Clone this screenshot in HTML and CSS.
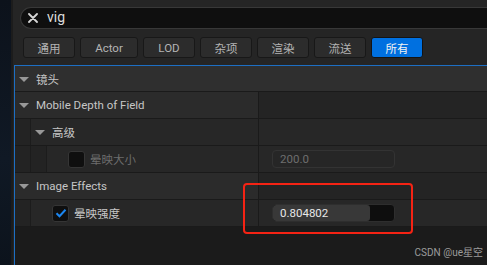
FILE: index.html
```html
<!DOCTYPE html>
<html>
<head>
<meta charset="utf-8">
<title>details</title>
<link rel="stylesheet" href="styles.css">
</head>
<body>
<div class="app">
  <div class="strip"></div>
  <div class="panel">
    <div class="search">
      <svg class="clear" width="10" height="10" viewBox="0 0 10 10"><path d="M1 1L9 9M9 1L1 9" stroke="#d6d6d6" stroke-width="1.8" stroke-linecap="round"/></svg>
      <span class="query">vig</span>
    </div>
    <div class="filters">
      <span class="btn">通用</span>
      <span class="btn wide">Actor</span>
      <span class="btn">LOD</span>
      <span class="btn">杂项</span>
      <span class="btn">渲染</span>
      <span class="btn">流送</span>
      <span class="btn on">所有</span>
    </div>
    <div class="tree">
      <div class="row cat">
        <div class="name"><span class="arrow"></span>镜头</div>
      </div>
      <div class="row group">
        <div class="name"><span class="arrow"></span>Mobile Depth of Field</div>
        <div class="value"></div>
      </div>
      <div class="row sub">
        <div class="name"><span class="indent"></span><span class="arrow"></span>高级</div>
        <div class="value"></div>
      </div>
      <div class="row prop">
        <div class="name"><span class="indent"></span><span class="indent"></span><span class="check"></span><span class="dim">晕映大小</span></div>
        <div class="value"><span class="field off">200.0</span></div>
      </div>
      <div class="row group">
        <div class="name"><span class="arrow"></span>Image Effects</div>
        <div class="value"></div>
      </div>
      <div class="row prop">
        <div class="name"><span class="indent"></span><span class="check on"><svg width="12" height="10" viewBox="0 0 12 10"><path d="M1.5 5.2L4.5 8.2L10.5 1.8" fill="none" stroke="#1b86f0" stroke-width="2"/></svg></span>晕映强度</div>
        <div class="value"><span class="field slider"><span class="fill" style="width: 97px"></span><span class="num">0.804802</span></span></div>
      </div>
      <div class="mark"></div>
      <div class="credit">CSDN @ue星空</div>
    </div>
  </div>
</div>
</body>
</html>
```

FILE: styles.css
```css
* {
    box-sizing: border-box;
    margin: 0;
    padding: 0;
}

body {
    background: #1b1b1b;
    font-family: Roboto, "Noto Sans CJK SC", sans-serif;
    font-size: 11.5px;
    color: #c6c6c6;
    overflow: hidden;
}

.app {
    display: flex;
    height: 265px;
}

.strip {
    width: 13px;
    background: linear-gradient(180deg, #0c121b, #101925 60%, #0c131c);
    border-right: 2px solid #1c1c1c;
    flex: none;
}

.panel {
    flex: 1;
    background: #252525;
    display: flex;
    flex-direction: column;
    min-width: 0;
}

.search {
    margin: 7px 0 0 7px;
    height: 22px;
    background: #0f0f0f;
    border: 1px solid #383838;
    border-right: none;
    border-radius: 11px 0 0 11px;
    display: flex;
    align-items: center;
    padding-left: 7px;
    gap: 9px;
}

.query {
    color: #dcdcdc;
    font-size: 14px;
    line-height: 1;
    padding-bottom: 2px;
}

.filters {
    display: flex;
    gap: 5px;
    margin: 8px 0 0 10px;
    height: 21px;
}

.btn {
    width: 52px;
    height: 21px;
    border: 1px solid #181818;
    border-radius: 3px;
    background: #2c2c2c;
    color: #b4b4b4;
    display: flex;
    align-items: center;
    justify-content: center;
}

.btn.wide {
    width: 58px;
}

.btn.on {
    background: #0070e0;
    border-color: #141414;
    color: #f2f2f2;
}

.tree {
    position: relative;
    flex: 1;
    margin: 7px 0 0 1px;
    border-top: 1px solid #1d6fc4;
    border-left: 1px solid #1d6fc4;
    background: #1b1b1b;
}

.row {
    display: flex;
    height: 27px;
    border-bottom: 1px solid #1a1a1a;
}

.row:first-child {
    height: 26px;
}

.row:last-of-type {
    border-bottom: none;
    height: 26px;
}

.name {
    width: 243px;
    display: flex;
    align-items: center;
    padding-left: 4px;
    flex: none;
}

.value {
    flex: 1;
    border-left: 1px solid #1a1a1a;
    display: flex;
    align-items: center;
    padding-left: 13px;
}

.cat {
    background: #2f2f2f;
}

.cat .name {
    width: auto;
}

.group .name {
    background: #2b2b2b;
}

.group .value {
    background: #242424;
}

.sub,
.prop {
    background: #272727;
}

.indent {
    width: 16px;
    align-self: stretch;
    background: #232323;
    border-right: 1px solid #1c1c1c;
    margin-left: -4px;
    margin-right: 4px;
    flex: none;
}

.indent + .indent {
    margin-left: -4px;
}

.arrow {
    width: 0;
    height: 0;
    border-left: 5px solid transparent;
    border-right: 5px solid transparent;
    border-top: 5px solid #989898;
    margin-right: 7px;
    margin-top: 1px;
}

.check {
    width: 17px;
    height: 17px;
    border: 1px solid #353535;
    border-radius: 3px;
    background: #0f0f0f;
    margin: 0 5px 0 17px;
    display: flex;
    align-items: center;
    justify-content: center;
}

.dim {
    color: #6c6c6c;
}

.field {
    width: 123px;
    height: 18px;
    border: 1px solid #333;
    border-radius: 4px;
    display: flex;
    align-items: center;
    padding-left: 7px;
    position: relative;
    overflow: hidden;
}

.field.off {
    background: #262626;
    color: #6e6e6e;
}

.field.slider {
    background: #0e0e0e;
    border-color: #2e2e2e;
    color: #e8e8e8;
}

.fill {
    position: absolute;
    left: 0;
    top: 0;
    bottom: 0;
    background: #383838;
    border-radius: 3px;
}

.num {
    position: relative;
}

.mark {
    position: absolute;
    left: 228px;
    top: 117px;
    width: 170px;
    height: 51px;
    border: 2px solid #f52314;
    border-radius: 4px;
}

.credit {
    position: absolute;
    right: 4px;
    bottom: 6px;
    color: #9c9c9c;
    font-size: 10px;
}
```
